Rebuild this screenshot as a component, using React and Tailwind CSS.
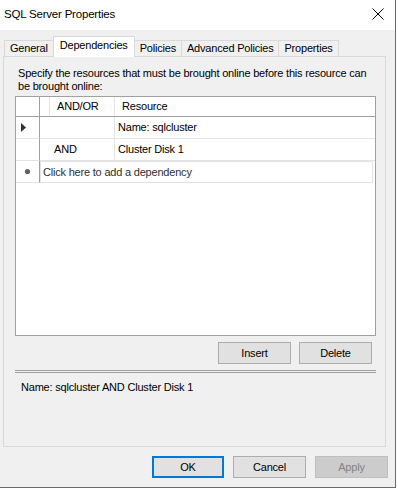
export default function App() {
  return (
    <div className="w-[398px] h-[492px] bg-white overflow-hidden">
      <div className="w-[396px] h-[488px] bg-[#f0f0f0] border-r border-b border-[#6b6b6b] flex flex-col font-['Liberation_Sans',Arial,sans-serif] text-[11px] tracking-[-0.2px] text-black leading-[13px]">
        {/* title bar */}
        <div className="h-[30px] shrink-0 bg-white flex items-center justify-between pl-[4px] pr-[11px]">
          <span className="text-[11.5px] tracking-[-0.2px] mt-[-2px]">SQL Server Properties</span>
          <svg width="12" height="12" viewBox="0 0 12 12" className="mt-[-2px]">
            <path d="M0.5 0.5 L11.5 11.5 M11.5 0.5 L0.5 11.5" stroke="#000" strokeWidth="1" fill="none" />
          </svg>
        </div>
        {/* tabs */}
        <div className="h-[26px] shrink-0 flex items-end pl-[4px] relative z-10">
          <div className="h-[16px] px-[5px] border-t border-l border-[#d9d9d9] bg-[#f0f0f0] flex items-center">General</div>
          <div className="h-[21px] mb-[-1px] px-[6px] border-t border-l border-r border-[#d9d9d9] bg-white flex items-start pt-[2px]">Dependencies</div>
          <div className="h-[16px] px-[5px] border-t border-r border-[#d9d9d9] bg-[#f0f0f0] flex items-center">Policies</div>
          <div className="h-[16px] px-[5px] border-t border-r border-[#d9d9d9] bg-[#f0f0f0] flex items-center">Advanced Policies</div>
          <div className="h-[16px] px-[5px] border-t border-r border-[#d9d9d9] bg-[#f0f0f0] flex items-center">Properties</div>
        </div>
        {/* panel */}
        <div className="ml-[3px] w-[383px] h-[391px] shrink-0 border border-[#d9d9d9] bg-[#f0f0f0] flex flex-col px-[11px] pt-[10px]">
          <div className="pl-[3px]">
            Specify the resources that must be brought online before this resource can
            <br />
            be brought online:
          </div>
          {/* grid */}
          <div className="mt-[3px] w-[361px] h-[240px] border border-[#a0a0a0] bg-white flex flex-col">
            {/* header */}
            <div className="h-[20px] flex border-b border-[#a0a0a0]">
              <div className="w-[24px] border-r border-[#a0a0a0]"></div>
              <div className="w-[10px] border-r border-[#e3e3e3]"></div>
              <div className="w-[65px] border-r border-[#e3e3e3] flex items-center pl-[7px]">AND/OR</div>
              <div className="flex-1 flex items-center pl-[7px]">Resource</div>
            </div>
            {/* row 1 */}
            <div className="h-[22px] flex">
              <div className="w-[24px] border-r border-b border-[#a0a0a0] border-b-[#e3e3e3] flex items-center pl-[5px]">
                <svg width="6" height="9" viewBox="0 0 6 9"><path d="M0 0 L5 4.5 L0 9 Z" fill="#303030" /></svg>
              </div>
              <div className="w-[75px] border-r border-b border-[#e3e3e3]"></div>
              <div className="flex-1 border-b border-[#e3e3e3] flex items-center pl-[3px]">Name: sqlcluster</div>
            </div>
            {/* row 2 */}
            <div className="h-[22px] flex">
              <div className="w-[24px] border-r border-b border-[#a0a0a0] border-b-[#e3e3e3]"></div>
              <div className="w-[10px] border-b border-[#e3e3e3]"></div>
              <div className="w-[65px] border-r border-b border-[#e3e3e3] flex items-center pl-[4px]">AND</div>
              <div className="flex-1 border-b border-[#e3e3e3] flex items-center pl-[3px]">Cluster Disk 1</div>
            </div>
            {/* row 3 */}
            <div className="h-[22px] flex">
              <div className="w-[24px] border-r border-b border-[#a0a0a0] border-b-[#e3e3e3] flex items-center justify-center">
                <svg width="7" height="7" viewBox="0 0 7 7"><circle cx="3.5" cy="3.5" r="2.6" fill="#606060" /></svg>
              </div>
              <div className="flex-1 border border-[#e3e3e3] mr-[2px] flex items-center pl-[2px] text-[#303030]">Click here to add a dependency</div>
            </div>
          </div>
          {/* buttons */}
          <div className="mt-[6px] flex justify-end gap-[8px] pr-[2px]">
            <button className="w-[73px] h-[22px] bg-[#e1e1e1] border border-[#adadad] leading-[13px]">Insert</button>
            <button className="w-[73px] h-[22px] bg-[#e1e1e1] border border-[#adadad] leading-[13px]">Delete</button>
          </div>
          <div className="mt-[6px] h-[3px] w-[361px] border-t border-b border-[#a0a0a0]"></div>
          <div className="mt-[8px] pl-[6px]">Name: sqlcluster AND Cluster Disk 1</div>
        </div>
        {/* bottom buttons */}
        <div className="mt-[9px] flex gap-[9px] pl-[152px]">
          <button className="w-[72px] h-[22px] bg-[#e1e1e1] border-2 border-[#0078d7] leading-[13px]">OK</button>
          <button className="w-[73px] h-[22px] bg-[#e1e1e1] border border-[#adadad] leading-[13px]">Cancel</button>
          <button className="w-[73px] h-[22px] bg-[#cccccc] border border-[#bfbfbf] text-[#838383] leading-[13px]">Apply</button>
        </div>
      </div>
    </div>
  );
}
